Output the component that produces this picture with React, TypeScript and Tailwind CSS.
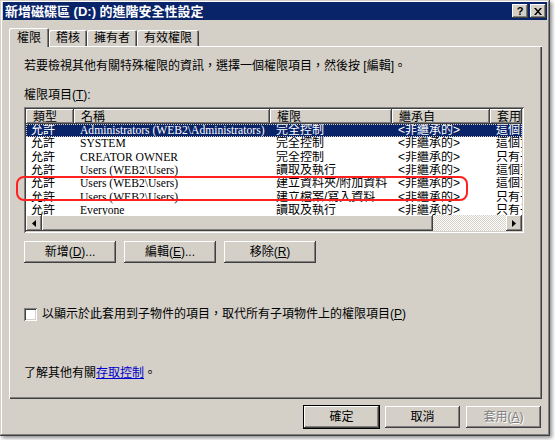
import React from "react";

const ui = "font-['Liberation_Sans','Noto_Sans_CJK_TC',sans-serif]";
const raised =
  "shadow-[inset_-1px_-1px_#404040,inset_1px_1px_#ffffff,inset_-2px_-2px_#808080,inset_2px_2px_#d4d0c8]";
const sunken =
  "shadow-[inset_1px_1px_#808080,inset_-1px_-1px_#ffffff,inset_2px_2px_#404040,inset_-2px_-2px_#d4d0c8]";

const rows = [
  ["允許", "Administrators (WEB2\\Administrators)", "完全控制", "<非繼承的>", "這個資料夾，子資料夾及檔案"],
  ["允許", "SYSTEM", "完全控制", "<非繼承的>", "這個資料夾，子資料夾及檔案"],
  ["允許", "CREATOR OWNER", "完全控制", "<非繼承的>", "只有子資料夾及檔案"],
  ["允許", "Users (WEB2\\Users)", "讀取及執行", "<非繼承的>", "這個資料夾，子資料夾及檔案"],
  ["允許", "Users (WEB2\\Users)", "建立資料夾/附加資料", "<非繼承的>", "這個資料夾及子資料夾"],
  ["允許", "Users (WEB2\\Users)", "建立檔案/寫入資料", "<非繼承的>", "只有子資料夾"],
  ["允許", "Everyone", "讀取及執行", "<非繼承的>", "只有子資料夾及檔案"],
];

// last column is cut off by the list's right edge, as in the dialog
const cols = ["w-[48px]", "w-[196px]", "w-[122px]", "w-[98px]", "w-[32px]"];
const heads = ["類型", "名稱", "權限", "繼承自", "套用到"];

const Key = ({ k }: { k: string }) => (
  <>
    (<span className="underline">{k}</span>)
  </>
);

const Btn = ({
  children,
  className = "",
}: {
  children: React.ReactNode;
  className?: string;
}) => (
  <div
    className={`flex h-[22px] items-center justify-center bg-[#d4d0c8] text-[12px] ${raised} ${className}`}
  >
    {children}
  </div>
);

const Tab = ({ label, active }: { label: string; active?: boolean }) => (
  <div
    className={`flex items-center rounded-t-[2px] bg-[#d4d0c8] text-[12px] shadow-[inset_1px_1px_#ffffff,inset_-1px_0_#404040,inset_-2px_0_#808080] ${
      active ? "relative z-10 -mb-px h-[19px] px-[8px]" : "h-[16px] px-[7px]"
    }`}
  >
    {label}
  </div>
);

export default function App() {
  return (
    <div className={`h-[440px] w-[555px] bg-white text-black ${ui}`}>
      <div className="relative flex h-[436px] w-[550px] flex-col bg-[#d4d0c8] px-[3px] pt-[2px] shadow-[inset_-1px_-1px_#404040,inset_1px_1px_#d4d0c8,inset_-2px_-2px_#808080,inset_2px_2px_#ffffff,2px_2px_4px_rgba(0,0,0,0.45)]">
        {/* title bar */}
        <div className="flex h-[18px] items-center justify-between bg-[#0a246a] pl-[2px] pr-[1px]">
          <span className="text-[13px] font-bold leading-none text-white">
            新增磁碟區 (D:) 的進階安全性設定
          </span>
          <div className="flex gap-[2px]">
            <div className={`flex h-[14px] w-[16px] items-center justify-center bg-[#d4d0c8] text-[11px] font-bold leading-none ${raised}`}>
              ?
            </div>
            <div className={`flex h-[14px] w-[16px] items-center justify-center bg-[#d4d0c8] ${raised}`}>
              <svg width="8" height="7" viewBox="0 0 8 7">
                <path d="M0 0h2l2 2.5L6 0h2L5 3.5 8 7H6L4 4.5 2 7H0l3-3.5z" fill="#000" />
              </svg>
            </div>
          </div>
        </div>

        {/* tabs */}
        <div className="ml-[6px] mt-[8px] flex h-[18px] items-end">
          <Tab label="權限" active />
          <Tab label="稽核" />
          <Tab label="擁有者" />
          <Tab label="有效權限" />
        </div>

        {/* tab panel */}
        <div className="ml-[6px] flex h-[353px] w-[533px] flex-col px-[15px] pt-[13px] text-[12px] leading-[14px] shadow-[inset_1px_1px_#ffffff,inset_-1px_-1px_#404040,inset_-2px_-2px_#808080]">
          <p>若要檢視其他有關特殊權限的資訊，選擇一個權限項目，然後按 [編輯]。</p>
          <p className="mt-[15px]">
            權限項目<Key k="T" />:
          </p>

          {/* list view */}
          <div className={`mt-[5px] flex h-[126px] w-[500px] flex-col overflow-hidden bg-white p-[2px] ${sunken}`}>
            <div className="flex h-[15px] shrink-0 overflow-hidden">
              {heads.map((h, i) => (
                <div
                  key={h}
                  className={`${i === 4 ? "flex-1" : cols[i]} flex shrink-0 items-center overflow-hidden whitespace-nowrap bg-[#d4d0c8] pl-[7px] ${raised}`}
                >
                  {h}
                </div>
              ))}
            </div>
            <div className="flex flex-col overflow-hidden">
              {rows.map((r, ri) => (
                <div
                  key={ri}
                  className={`flex h-[13.3px] shrink-0 items-center leading-[13px] ${
                    ri === 0
                      ? "bg-[#0a246a] text-white outline-1 -outline-offset-1 outline-dotted outline-[#d4d0c8]"
                      : ""
                  }`}
                >
                  {r.map((c, ci) => (
                    <div
                      key={ci}
                      className={`${cols[ci]} shrink-0 overflow-hidden whitespace-nowrap ${
                        ci === 0 ? "pl-[5px]" : "pl-[6px]"
                      } ${ci === 1 ? "font-['Liberation_Serif','Noto_Sans_CJK_TC',serif] text-[11.6px]" : ""}`}
                    >
                      {c}
                    </div>
                  ))}
                </div>
              ))}
            </div>
            <div className="flex-1" />
            {/* horizontal scrollbar */}
            <div className="flex h-[16px] shrink-0">
              <div className={`flex w-[16px] items-center justify-center bg-[#d4d0c8] ${raised}`}>
                <svg width="4" height="7" viewBox="0 0 4 7">
                  <path d="M4 0v7L0 3.5z" fill="#000" />
                </svg>
              </div>
              <div className={`w-[391px] bg-[#d4d0c8] ${raised}`} />
              <div className="flex-1 bg-[repeating-conic-gradient(#ffffff_0_25%,#d4d0c8_0_50%)] [background-size:2px_2px]" />
              <div className={`flex w-[16px] items-center justify-center bg-[#d4d0c8] ${raised}`}>
                <svg width="4" height="7" viewBox="0 0 4 7">
                  <path d="M0 0v7l4-3.5z" fill="#000" />
                </svg>
              </div>
            </div>
          </div>

          {/* list buttons */}
          <div className="mt-[8px] flex gap-[8px]">
            <Btn className="w-[92px]">
              新增<Key k="D" />...
            </Btn>
            <Btn className="w-[92px]">
              編輯<Key k="E" />...
            </Btn>
            <Btn className="w-[92px]">
              移除<Key k="R" />
            </Btn>
          </div>

          <div className="mt-[44px] flex items-center gap-[5px]">
            <div className={`h-[13px] w-[13px] bg-white ${sunken}`} />
            <span>
              以顯示於此套用到子物件的項目，取代所有子項物件上的權限項目<Key k="P" />
            </span>
          </div>

          <p className="mt-[45px]">
            了解其他有關<span className="text-[#0000cc] underline">存取控制</span>。
          </p>
        </div>

        {/* dialog buttons */}
        <div className="mt-[7px] flex justify-end gap-[6px] pr-[6px]">
          <Btn className="w-[75px] outline outline-1 outline-black">確定</Btn>
          <Btn className="w-[75px]">取消</Btn>
          <Btn className="w-[75px] text-[#808080] [text-shadow:1px_1px_0_#ffffff]">
            套用<Key k="A" />
          </Btn>
        </div>

        {/* red annotation around highlighted rows */}
        <div className="pointer-events-none absolute left-[16px] top-[176px] h-[25px] w-[452px] rounded-[8px] border-2 border-[#ff2020]" />
      </div>
    </div>
  );
}
